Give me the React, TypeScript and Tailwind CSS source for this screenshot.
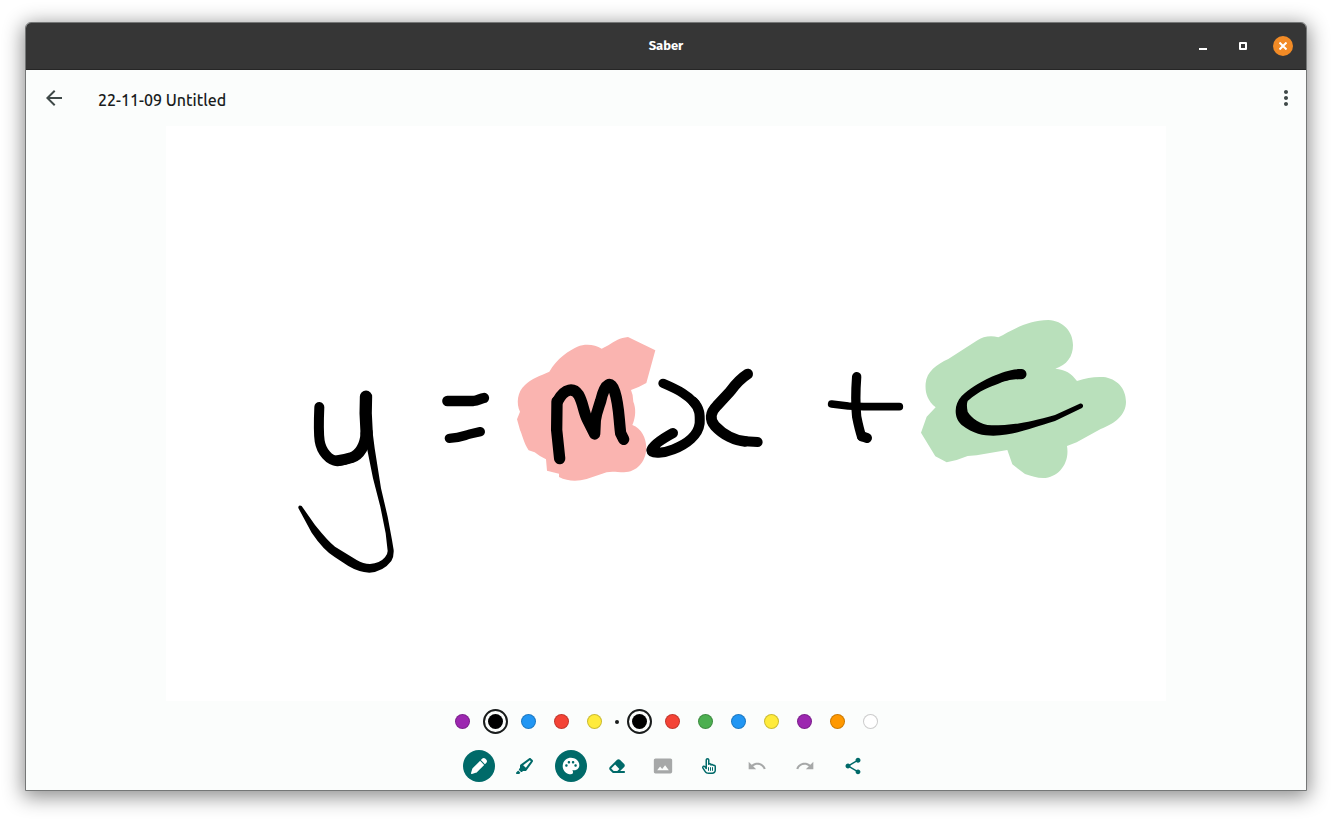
import { useState, type ReactNode } from "react";
import { FaPen, FaHighlighter, FaEraser, FaRegHandPointer } from "react-icons/fa6";
import { MdArrowBack, MdMoreVert, MdPalette, MdPhotoSizeSelectActual, MdRedo, MdShare, MdUndo } from "react-icons/md";

const recentColors = [
  { name: "Purple", fill: "bg-[#9c27b0]" },
  { name: "Black", fill: "bg-black" },
  { name: "Blue", fill: "bg-[#2196f3]" },
  { name: "Red", fill: "bg-[#f44336]" },
  { name: "Yellow", fill: "bg-[#ffeb3b]" },
];

const presetColors = [
  { name: "Black", fill: "bg-black" },
  { name: "Red", fill: "bg-[#f44336]" },
  { name: "Green", fill: "bg-[#4caf50]" },
  { name: "Blue", fill: "bg-[#2196f3]" },
  { name: "Yellow", fill: "bg-[#ffeb3b]" },
  { name: "Purple", fill: "bg-[#9c27b0]" },
  { name: "Orange", fill: "bg-[#ff9800]" },
  { name: "White", fill: "bg-white" },
];

function Swatch({ name, fill, selected, onPick }: { name: string; fill: string; selected: boolean; onPick: () => void }) {
  return (
    <button
      type="button"
      aria-label={name}
      aria-pressed={selected}
      onClick={onPick}
      className={`flex size-[25px] items-center justify-center rounded-full border-2 ${selected ? "border-[#191c1c]" : "border-transparent"}`}
    >
      <span className={`size-[15px] rounded-full border border-black/20 ${fill}`} />
    </button>
  );
}

function ToolButton({ label, active, disabled, children }: { label: string; active?: boolean; disabled?: boolean; children: ReactNode }) {
  const tone = active ? "bg-[#006a69] text-white" : disabled ? "text-[#a6a8a8]" : "text-[#006a69]";
  return (
    <button type="button" aria-label={label} disabled={disabled} className={`flex size-8 items-center justify-center rounded-full ${tone}`}>
      {children}
    </button>
  );
}

function Drawing() {
  return (
    <svg viewBox="0 0 1000 575" className="h-full w-full" role="img" aria-label="Handwritten equation">
      <g transform="translate(334 194) scale(.33333)">
        <path
          fill="#fab4b0"
          d="M148 155C170 115 210 90 232 80C258 70 285 74 305 86L325 76C345 62 360 54 384 51L466 91L439 189Q415 203 393 210Q400 225 400 245C408 265 408 290 397 315C425 325 439 355 439 385C438 425 410 457 372 457C350 456 335 453 320 457L260 477Q215 490 177 471V461L141 452L138 418Q120 410 104 397L86 391C72 370 65 340 60 330L51 298L60 275C48 250 52 215 75 195C95 175 120 168 148 155Z"
        />
      </g>
      <g transform="translate(644 174) scale(.33333)">
        <path
          fill="#b9e0bb"
          d="M415 177L500 122Q530 103 565 112C600 95 650 60 715 60C760 62 789 95 789 135C789 170 770 195 736 206C765 208 785 220 801 243C830 233 850 230 880 231C920 235 948 265 948 305C948 345 915 370 872 387L800 427L771 438C780 490 745 533 700 534C680 534 665 528 645 522L607 493L592 450L500 466L473 468Q440 482 410 487L376 469L333 398L350 350L377 322C350 300 345 275 347 250C350 215 380 193 415 177Z"
        />
      </g>
      <g fill="none" stroke="#000" strokeLinecap="round" strokeLinejoin="round">
        <g transform="translate(114 244) scale(.33333)">
          <path strokeWidth="30" d="M118 111C116 155 115 185 119 213C124 245 148 272 172 273C185 273 203 267 214 263" />
          <path strokeWidth="33" d="M172 272C190 270 203 267 214 263C240 255 256 225 258 190" />
          <path strokeWidth="37" d="M258 80L257 130L260 190" />
          <path
            fill="#000"
            stroke="none"
            d="M277 180L284 235L303 355L323 440L336 510L341 540Q342 560 334 573Q310 605 268 608Q235 606 205 588L165 562Q130 540 95 488L55 414Q54 404 65 408L105 465Q145 515 165 530L230 570Q250 582 270 582Q300 580 315 562Q323 552 323 543L317 490L301 410L279 325L262 240L250 200Z"
          />
          <path strokeWidth="31" d="M502 93L580 93C595 91 600 86 612 84" />
          <path strokeWidth="28" d="M508 205C545 203 550 197 570 192L601 185" />
        </g>
        <g transform="translate(334 194) scale(.33333)" strokeWidth="32">
          <path strokeWidth="34" d="M171 245L170 330L179 416" />
          <path strokeWidth="34" d="M173 243C195 203 221 203 236 225C250 250 250 275 262 298L284 342L286 300C290 275 296 262 302 243C315 185 334 182 344 215C357 255 356 290 362 340L371 358" />
          <path strokeWidth="28" d="M489 190C540 212 562 225 585 250" />
          <path strokeWidth="30" d="M580 245C600 265 600 285 599 310C595 345 560 372 520 388C490 400 455 402 454 391C458 375 490 355 519 339" />
          <path d="M743 162C715 180 705 195 690 215L650 258C630 278 628 300 645 318C670 345 705 362 735 364" />
          <path strokeWidth="30" d="M735 364L773 366" />
        </g>
        <g transform="translate(644 174) scale(.33333)">
          <path strokeWidth="28" d="M140 230C137 270 137 320 140 350C145 375 150 395 155 410" />
          <path strokeWidth="30" d="M156 409L171 414" />
          <path strokeWidth="23" d="M65 312L115 318L160 320L268 320" />
          <path
            fill="#000"
            stroke="none"
            d="M633 207C595 208 580 217 545 230C500 252 480 265 455 288C430 315 432 355 455 375C490 402 520 407 550 407C620 404 660 385 735 363L816 324C823 318 818 308 809 311L735 345C640 372 600 376 545 376C510 374 485 355 473 335C470 320 470 310 473 303C510 270 540 260 565 251C600 238 610 238 635 238A15 15 0 0 0 633 207Z"
          />
        </g>
      </g>
    </svg>
  );
}

export default function App() {
  const [recent, setRecent] = useState(1);
  const [preset, setPreset] = useState(0);

  return (
    <div className="flex min-h-screen bg-white px-[25px] pt-[22px] pb-7 font-['Ubuntu','Noto_Sans',sans-serif]">
      <div className="flex flex-1 flex-col overflow-hidden rounded-t-md border border-[#757777] bg-[#fbfdfc] shadow-[0_4px_20px_2px_rgba(0,0,0,0.45)]">
        <header className="grid h-[47px] grid-cols-3 items-center border-b border-[#262626] bg-[#363636] text-white">
          <h1 className="col-start-2 text-center font-['Fira_Sans','Noto_Sans',sans-serif] text-[13px] font-bold">Saber</h1>
          <div className="flex justify-end gap-5 pr-[13px]">
            <button type="button" aria-label="Minimize" className="flex size-5 items-center justify-center pt-[5px]">
              <span className="h-0.5 w-2 bg-white" />
            </button>
            <button type="button" aria-label="Maximize" className="flex size-5 items-center justify-center">
              <span className="size-2 rounded-[1px] border-2 border-white" />
            </button>
            <button type="button" aria-label="Close" className="flex size-5 items-center justify-center rounded-full bg-[#f28b26]">
              <svg viewBox="0 0 8 8" className="size-2" fill="none" stroke="#fff" strokeWidth="2">
                <path d="M.5 .5l7 7M7.5 .5l-7 7" />
              </svg>
            </button>
          </div>
        </header>

        <div className="flex h-14 items-center px-2 text-[#3f4948]">
          <button type="button" aria-label="Back" className="flex size-10 items-center justify-center">
            <MdArrowBack className="size-6" />
          </button>
          <h2 className="ml-6 flex-1 pt-1 text-base font-medium text-[#191c1c]">22-11-09 Untitled</h2>
          <button type="button" aria-label="More options" className="flex size-6 items-center justify-center">
            <MdMoreVert className="size-6" />
          </button>
        </div>

        <main className="mx-auto min-h-0 w-full max-w-[1000px] flex-1 bg-white">
          <Drawing />
        </main>

        <div className="flex h-[41px] items-center justify-center gap-2" role="group" aria-label="Colors">
          {recentColors.map((c, i) => (
            <Swatch key={c.name} {...c} selected={i === recent} onPick={() => setRecent(i)} />
          ))}
          <span className="size-1 rounded-full bg-[#191c1c]" />
          {presetColors.map((c, i) => (
            <Swatch key={c.name} {...c} selected={i === preset} onPick={() => setPreset(i)} />
          ))}
        </div>

        <div className="flex h-12 items-center justify-center gap-4" role="toolbar" aria-label="Tools">
          <div className="flex gap-3.5">
            <ToolButton label="Pen" active>
              <FaPen className="size-4" />
            </ToolButton>
            <ToolButton label="Highlighter">
              <FaHighlighter className="size-[18px]" />
            </ToolButton>
            <ToolButton label="Toggle colors" active>
              <MdPalette className="size-5" />
            </ToolButton>
            <ToolButton label="Eraser">
              <FaEraser className="size-[18px]" />
            </ToolButton>
            <ToolButton label="Insert image" disabled>
              <MdPhotoSizeSelectActual className="size-5" />
            </ToolButton>
            <ToolButton label="Finger drawing">
              <FaRegHandPointer className="size-4" />
            </ToolButton>
          </div>
          <ToolButton label="Undo" disabled>
            <MdUndo className="size-5" />
          </ToolButton>
          <ToolButton label="Redo" disabled>
            <MdRedo className="size-5" />
          </ToolButton>
          <ToolButton label="Share">
            <MdShare className="size-5" />
          </ToolButton>
        </div>
      </div>
    </div>
  );
}
